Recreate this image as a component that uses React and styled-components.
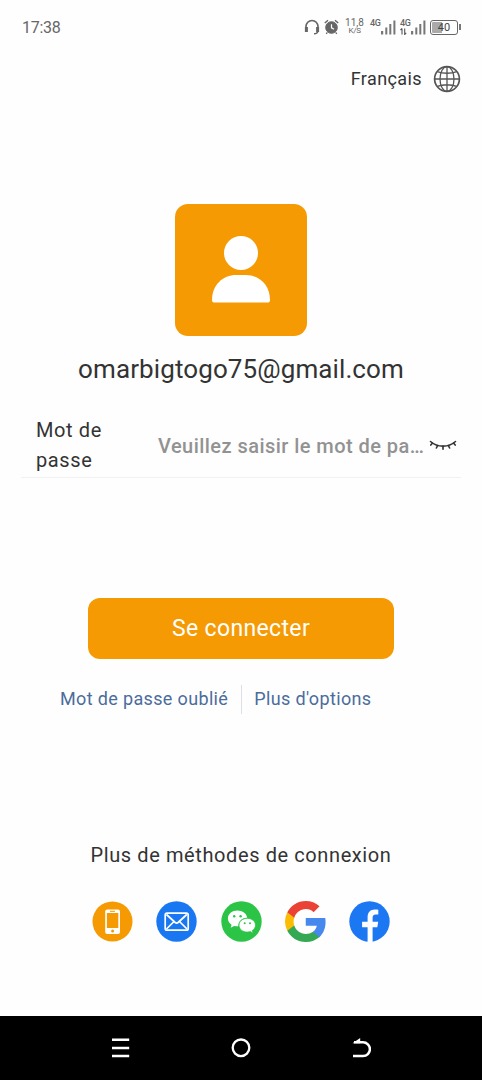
import React, { useState } from 'react';
import styled, { createGlobalStyle } from 'styled-components';

const colors = {
  primary: '#f59a03',
  text: '#333',
  placeholder: '#929292',
  link: '#4b6c9c',
  status: '#666',
};

const GlobalStyle = createGlobalStyle`
  * {
    box-sizing: border-box;
  }
  body {
    margin: 0;
    background: #fefefe;
    color: ${colors.text};
    font-family: Roboto, 'Liberation Sans', sans-serif;
  }
  button, input {
    font-family: inherit;
  }
  svg {
    display: block;
    flex: none;
  }
`;

const HeadsetIcon = () => (
  <svg width="16" height="16" viewBox="0 0 16 16" fill="none" stroke={colors.status}>
    <path d="M2 10V7.500a6 6 0 0 1 12 0V10" strokeWidth="1.700" />
    <path d="M2.400 8v5M13.600 8v5" strokeWidth="3" />
    <path d="M13.800 12c0 2-1.200 2.700-3.800 2.800" strokeWidth="1.500" />
  </svg>
);

const AlarmIcon = () => (
  <svg width="15" height="16" viewBox="0 0 15 16" fill="none" stroke={colors.status}>
    <circle cx="7.500" cy="8.500" r="5.800" fill={colors.status} />
    <path d="M.8 4 4 1.300M14.200 4 11 1.300" strokeWidth="1.500" />
    <path d="M3.400 13.400 2.200 14.800M11.600 13.400l1.200 1.400" strokeWidth="1.300" />
    <path d="M7.500 5.200v3.600l2.500 1.400" stroke="#fefefe" strokeWidth="1.200" />
  </svg>
);

const SignalBars = () => (
  <svg width="15" height="15" viewBox="0 0 15 15" fill="#777">
    <rect x="0" y="11" width="2.200" height="3.500" />
    <rect x="4.300" y="7.500" width="2" height="7" />
    <rect x="8.300" y="4" width="2" height="10.500" />
    <rect x="12.400" y=".5" width="2" height="14" />
  </svg>
);

const DataArrows = () => (
  <svg width="7" height="7" viewBox="0 0 7 7" fill="none" stroke="#555" strokeWidth="1.100">
    <path d="M2 .5v6M.5 2 2 .5M4.700.5v6l1.500-1.700" />
  </svg>
);

const GlobeIcon = () => (
  <svg width="28" height="28" viewBox="0 0 28 28" fill="none" stroke="#555" strokeWidth="1.300">
    <circle cx="14" cy="14" r="12.400" strokeWidth="1.700" />
    <ellipse cx="14" cy="14" rx="7" ry="12.400" />
    <path d="M14 1.600v24.800M1.600 14h24.800M4.200 6.600c5.600 2.200 14 2.200 19.600 0M4.200 21.400c5.600-2.200 14-2.200 19.600 0" />
  </svg>
);

const UserIcon = () => (
  <svg width="60" height="68" viewBox="0 0 60 68" fill="#fff">
    <circle cx="30" cy="17" r="17" />
    <path d="M1 64C1 49 12 39 25 39h10c13 0 24 10 24 25 0 1.800-1 2.600-2.800 2.600H3.800C2 66.600 1 65.800 1 64Z" />
  </svg>
);

const ClosedEyeIcon = () => (
  <svg width="28" height="12" viewBox="0 0 28 12" fill="none" stroke="#333" strokeWidth="1.600" strokeLinecap="round">
    <path d="M1.500 1.500C8.500 7.700 19.500 7.700 26.500 1.500" />
    <path d="M3.500 3.100 1.800 5.100M8.600 5.600 7.400 8M14 6.300v2.900M19.400 5.600 20.600 8M24.500 3.100l1.700 2" />
  </svg>
);

const PhoneLogo = () => (
  <svg width="41" height="41" viewBox="0 0 41 41">
    <circle cx="20.500" cy="20.500" r="20" fill={colors.primary} />
    <rect x="13.200" y="8.500" width="14.800" height="24.500" rx="2" fill="#fff" />
    <rect x="14.900" y="12" width="11.400" height="15" fill={colors.primary} />
    <path d="M18 10.300h5" stroke={colors.primary} strokeWidth="1" />
    <circle cx="20.600" cy="30" r="1.500" fill={colors.primary} />
  </svg>
);

const MailLogo = () => (
  <svg width="41" height="41" viewBox="0 0 41 41">
    <circle cx="20.500" cy="20.500" r="20.200" fill="#1a77f2" />
    <g fill="none" stroke="#fff" strokeWidth="1.700" strokeLinejoin="round">
      <rect x="9.200" y="12.200" width="23" height="17" rx="1.800" />
      <path d="m10.500 13.500 8.700 8c.9.700 2 .7 2.900 0l8.700-8M10.500 28l7.500-7.500M31 28l-7.500-7.500" />
    </g>
  </svg>
);

const WechatLogo = () => (
  <svg width="41" height="41" viewBox="0 0 41 41">
    <circle cx="20.500" cy="20.500" r="20.200" fill="#2bc446" />
    <path
      d="M16.500 9.500c-5.400 0-9.600 3.500-9.600 8 0 2.600 1.400 4.800 3.700 6.200l-1 3.100 3.500-1.900c1.300.4 2.700.5 4.300.4-.2-4.900 3.600-8.600 8.900-8.500-.8-4.300-4.800-7.300-9.800-7.300Z"
      fill="#fff"
    />
    <path
      d="M26.300 17.300c-4.700 0-8.300 3-8.300 6.900s3.600 6.900 8.300 6.900c1.100 0 2.100-.2 3-.5l2.800 1.600-.8-2.600c2-1.300 3.200-3.200 3.200-5.400 0-3.900-3.600-6.900-8.200-6.900Z"
      fill="#fff"
      stroke="#2bc446"
      strokeWidth=".8"
    />
    <g fill="#2bc446">
      <circle cx="13.200" cy="15.200" r="1.200" />
      <circle cx="19.600" cy="15.200" r="1.200" />
      <circle cx="23.700" cy="22.200" r="1" />
      <circle cx="29" cy="22.200" r="1" />
    </g>
  </svg>
);

const GoogleLogo = () => (
  <svg width="41" height="41" viewBox="0 0 48 48">
    <path fill="#4688ed" d="M47.500 24.600c0-1.600-.1-3.200-.4-4.700H24.300v9.200h13c-.6 3-2.300 5.500-4.900 7.200v6h7.900c4.600-4.200 7.200-10.500 7.200-17.700Z" />
    <path fill="#34a853" d="M24.300 48c6.500 0 12-2.100 16-5.800l-7.900-6c-2.200 1.400-4.900 2.300-8.100 2.300-6.300 0-11.600-4.200-13.500-9.900H2.700v6.200C6.700 42.700 14.900 48 24.300 48Z" />
    <path fill="#fbbc05" d="M10.800 28.600c-1-3-1-6.100 0-9.100v-6.200H2.700a24 24 0 0 0 0 21.500l8.100-6.200Z" />
    <path fill="#ea4335" d="M24.300 9.500c3.400-.1 6.800 1.200 9.200 3.600l6.900-6.900C36 2.200 30.300 0 24.300 0 14.900.1 6.700 5.300 2.700 13.300l8.100 6.200c1.900-5.700 7.200-10 13.500-10Z" />
  </svg>
);

const FacebookLogo = () => (
  <svg width="41" height="41" viewBox="0 0 41 41">
    <circle cx="20.500" cy="20.500" r="20.200" fill="#1b77f2" />
    <path
      d="M18.600 41V26.300h-5.500v-5.600h5.500v-4.500c0-5 3-7.700 7.300-7.700 1.200 0 2.400.1 3.400.3v4.800h-2.500c-2.500 0-3.200 1.400-3.200 3.200v3.900h5.600l-.9 5.600h-4.700V41Z"
      fill="#fff"
    />
  </svg>
);

const MenuIcon = () => (
  <svg width="20" height="22" viewBox="0 0 20 22" stroke="#fff" strokeWidth="2.400">
    <path d="M1 2.800h17.200M1 11h17.200M1 19h17.200" />
  </svg>
);

const HomeIcon = () => (
  <svg width="20" height="22" viewBox="0 0 20 22" fill="none" stroke="#fff" strokeWidth="2.300">
    <circle cx="10" cy="10.800" r="8.300" />
  </svg>
);

const BackIcon = () => (
  <svg width="20" height="22" viewBox="0 0 20 22" fill="none" stroke="#fff" strokeWidth="2.500">
    <path d="M3 5.300h9a6.900 6.900 0 0 1 0 13.800H2" />
    <path d="M1.500 6.300 9.200 1v5.300Z" fill="#fff" stroke="none" />
  </svg>
);

const loginMethods = [
  { name: 'phone', Logo: PhoneLogo },
  { name: 'email', Logo: MailLogo },
  { name: 'wechat', Logo: WechatLogo },
  { name: 'google', Logo: GoogleLogo },
  { name: 'facebook', Logo: FacebookLogo },
];

const App = () => {
  const [password, setPassword] = useState('');
  const [visible, setVisible] = useState(false);

  return (
    <Screen>
      <GlobalStyle />
      <StatusBar>
        <Time>17:38</Time>
        <StatusIcons>
          <HeadsetIcon />
          <AlarmIcon />
          <Speed>
            <span>11,8</span>
            <small>K/S</small>
          </Speed>
          <Network>
            <NetworkType>4G</NetworkType>
            <SignalBars />
          </Network>
          <Network>
            <NetworkType>
              4G
              <DataArrows />
            </NetworkType>
            <SignalBars />
          </Network>
          <Battery>
            <BatteryBody>40</BatteryBody>
            <BatteryTip />
          </Battery>
        </StatusIcons>
      </StatusBar>

      <Language>
        <span>Français</span>
        <GlobeIcon />
      </Language>

      <Avatar>
        <UserIcon />
      </Avatar>
      <Email>omarbigtogo75@gmail.com</Email>

      <Field>
        <FieldLabel htmlFor="password">Mot de passe</FieldLabel>
        <PasswordInput
          id="password"
          type={visible || !password ? 'text' : 'password'}
          placeholder="Veuillez saisir le mot de passe"
          value={password}
          onChange={(e) => setPassword(e.target.value)}
        />
        <IconButton type="button" onClick={() => setVisible(!visible)}>
          <ClosedEyeIcon />
        </IconButton>
      </Field>

      <LoginButton type="button">Se connecter</LoginButton>

      <Links>
        <Link>Mot de passe oublié</Link>
        <Divider />
        <Link>Plus d'options</Link>
      </Links>

      <MethodsTitle>Plus de méthodes de connexion</MethodsTitle>
      <Methods>
        {loginMethods.map(({ name, Logo }) => (
          <IconButton key={name} type="button" aria-label={name}>
            <Logo />
          </IconButton>
        ))}
      </Methods>

      <NavBar>
        <MenuIcon />
        <HomeIcon />
        <BackIcon />
      </NavBar>
    </Screen>
  );
};

const Screen = styled.div`
  display: flex;
  flex-direction: column;
  align-items: center;
  width: 100%;
  height: 1080px;
  overflow: hidden;
`;

const StatusBar = styled.header`
  display: flex;
  justify-content: space-between;
  align-items: center;
  width: 100%;
  height: 54px;
  padding: 0 21px 0 22px;
  color: ${colors.status};
`;

const Time = styled.span`
  font-size: 16px;
  letter-spacing: -0.3px;
`;

const StatusIcons = styled.div`
  display: flex;
  align-items: center;
  gap: 4px;
`;

const Speed = styled.div`
  display: flex;
  flex-direction: column;
  align-items: center;
  width: 23px;
  margin-top: -2px;
  font-size: 10px;
  line-height: 9px;

  small {
    font-size: 8px;
    line-height: 7px;
    letter-spacing: -0.3px;
  }
`;

const Network = styled.div`
  display: flex;
  align-items: flex-end;
  width: 26px;
  padding-bottom: 1px;
`;

const NetworkType = styled.span`
  display: flex;
  flex-direction: column;
  width: 11px;
  height: 16px;
  font-size: 9px;
  font-weight: 500;
  line-height: 9px;
  letter-spacing: -0.3px;
`;

const Battery = styled.div`
  display: flex;
  align-items: center;
  gap: 1px;
`;

const BatteryBody = styled.div`
  width: 28px;
  height: 15px;
  border: 1px solid #666;
  border-radius: 3px;
  background: linear-gradient(90deg, #aaa 40%, transparent 40%) content-box;
  padding: 1px;
  color: #444;
  font-size: 11px;
  line-height: 11px;
  text-align: center;
`;

const BatteryTip = styled.div`
  width: 2px;
  height: 6px;
  background: #777;
`;

const Language = styled.div`
  display: flex;
  align-items: center;
  align-self: flex-end;
  gap: 11px;
  height: 50px;
  padding-right: 21px;
  font-size: 18px;
  letter-spacing: 0.4px;

  span {
    padding-bottom: 2px;
  }
`;

const Avatar = styled.div`
  display: flex;
  justify-content: center;
  width: 132px;
  height: 132px;
  margin-top: 100px;
  padding-top: 32px;
  border-radius: 13px;
  background: ${colors.primary};
`;

const Email = styled.div`
  margin-top: 17px;
  font-size: 26px;
  line-height: 32px;
  letter-spacing: 0.1px;
`;

const Field = styled.div`
  display: flex;
  align-items: center;
  width: 440px;
  height: 63px;
  margin-top: 30px;
  padding: 0 4px 0 15px;
  border-bottom: 1px solid #f1f1f1;
`;

const FieldLabel = styled.label`
  width: 122px;
  padding: 0 40px 2px 0;
  font-size: 20px;
  line-height: 30px;
  letter-spacing: 0.6px;
`;

const PasswordInput = styled.input`
  flex: 1;
  min-width: 0;
  padding: 0;
  border: none;
  outline: none;
  background: none;
  color: ${colors.text};
  font-size: 20px;
  font-weight: 500;
  letter-spacing: 0.45px;
  text-overflow: ellipsis;

  &::placeholder {
    color: ${colors.placeholder};
    opacity: 1;
  }
`;

const IconButton = styled.button`
  padding: 0;
  border: none;
  background: none;
  cursor: pointer;
`;

const LoginButton = styled.button`
  width: 306px;
  height: 61px;
  margin-top: 120px;
  padding: 0;
  border: none;
  border-radius: 12px;
  background: ${colors.primary};
  color: #fff;
  font-size: 23px;
  letter-spacing: 0.35px;
  cursor: pointer;
`;

const Links = styled.div`
  display: flex;
  align-items: center;
  align-self: flex-start;
  gap: 12.5px;
  margin-top: 26px;
  padding-left: 60px;
`;

const Link = styled.a`
  padding-bottom: 2px;
  color: ${colors.link};
  font-size: 18px;
  line-height: 27px;
  letter-spacing: 0.35px;
  white-space: nowrap;
  cursor: pointer;
`;

const Divider = styled.span`
  width: 1px;
  height: 29px;
  background: #dcdfe3;
`;

const MethodsTitle = styled.div`
  margin-top: 129px;
  font-size: 20px;
  line-height: 24px;
  letter-spacing: 0.6px;
`;

const Methods = styled.div`
  display: flex;
  gap: 23.25px;
  margin-top: 34px;
`;

const NavBar = styled.nav`
  display: flex;
  justify-content: center;
  align-items: center;
  gap: 100px;
  width: 100%;
  height: 64px;
  margin-top: auto;
  background: #000;
`;

export default App;
